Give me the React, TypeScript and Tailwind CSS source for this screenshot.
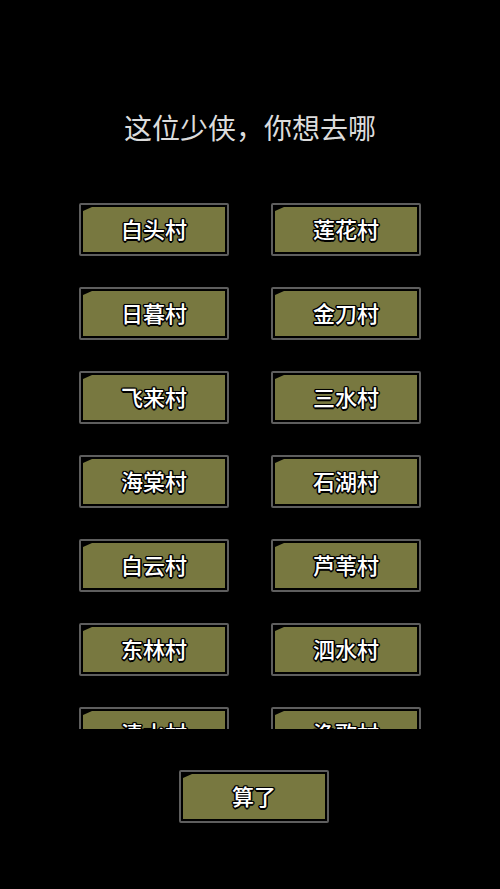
import React from "react";

const villages = [
  ["白头村", "莲花村"],
  ["日暮村", "金刀村"],
  ["飞来村", "三水村"],
  ["海棠村", "石湖村"],
  ["白云村", "芦苇村"],
  ["东林村", "泗水村"],
  ["清水村", "渔歌村"],
];

function GameButton({ label }: { label: string }) {
  return (
    <div className="w-[150px] h-[53px] border-2 border-[#5e5e5e] rounded-[2px] bg-black p-[2px] box-border">
      <div className="w-full h-full bg-[#787840] [clip-path:polygon(9px_0,100%_0,100%_100%,0_100%,0_4px)] flex items-center justify-center pb-[4px]">
        <span className="text-white text-[22px] leading-[26px] font-medium [text-shadow:-1px_-1px_0_#000,1px_-1px_0_#000,-1px_1px_0_#000,1px_1px_0_#000,0_0_2px_#000,0_-1.5px_0_#000,0_1.5px_0_#000,1.5px_0_0_#000,-1.5px_0_0_#000]">
          {label}
        </span>
      </div>
    </div>
  );
}

export default function App() {
  return (
    <div
      className="w-[500px] h-[889px] bg-black overflow-hidden flex flex-col items-center"
      style={{ fontFamily: '"Noto Sans CJK SC", "Noto Sans", sans-serif' }}
    >
      <div className="pt-[109px] h-[146px] text-[28px] leading-[36px] text-[#dcdcdc]">
        这位少侠，你想去哪
      </div>
      <div className="mt-[34px] h-[549px] w-full overflow-hidden pt-[23px] flex justify-center">
        <div className="grid grid-cols-[150px_150px] gap-x-[42px] gap-y-[31px] content-start">
          {villages.map((row) =>
            row.map((v) => <GameButton key={v} label={v} />)
          )}
        </div>
      </div>
      <div className="mt-[41px] ml-[8px]">
        <GameButton label="算了" />
      </div>
    </div>
  );
}
